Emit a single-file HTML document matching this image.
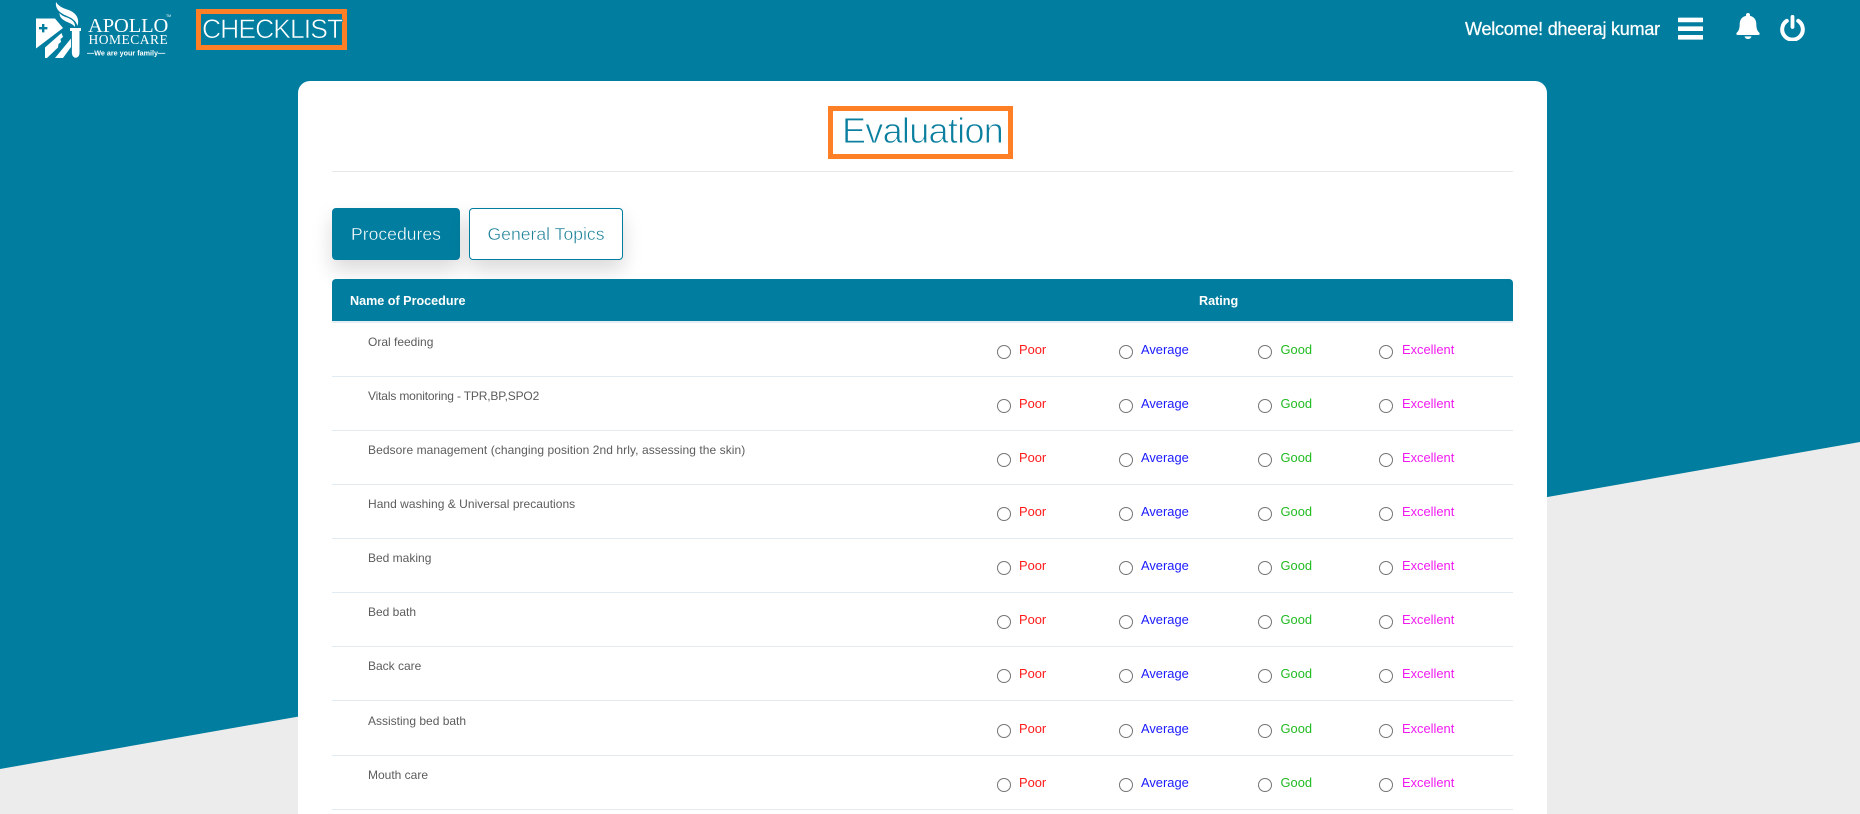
<!DOCTYPE html>
<html lang="en">
<head>
<meta charset="utf-8">
<title>Checklist - Evaluation</title>
<style>
html,body{margin:0;padding:0;width:1860px;height:814px;overflow:hidden}
body{position:relative;background:#ececec;font-family:"Liberation Sans",Arial,sans-serif}
.bg{position:absolute;left:0;top:0}
.abs{position:absolute;white-space:nowrap}
#logo{position:absolute;left:0;top:0}
#checklist{position:absolute;left:196px;top:9px;width:151px;height:41px;box-sizing:border-box;border:5px solid #ff7f27}
#checklist span{position:absolute;left:1px;top:0;line-height:31px;font-size:26.5px;color:#fff;letter-spacing:-.95px;white-space:nowrap;-webkit-text-stroke:.6px #007d9f}
#welcome{left:1465px;top:18px;line-height:22px;font-size:18px;color:#fff;letter-spacing:-.22px;-webkit-text-stroke:.25px #fff}
#card{position:absolute;left:298px;top:81px;width:1249px;height:733px;background:#fff;border-radius:12px 12px 0 0}
#evalbox{position:absolute;left:828px;top:106px;width:185px;height:53px;box-sizing:border-box;border:5px solid #ff7f27;background:#fff}
#evalbox span{position:absolute;left:9px;top:-2px;line-height:43px;font-size:36px;color:#0a7f9f;letter-spacing:-.7px;white-space:nowrap;-webkit-text-stroke:.9px #fff}
#divider{position:absolute;left:332px;top:171px;width:1181px;height:1px;background:#e6e8ea}
.tab{position:absolute;top:208px;height:52px;box-sizing:border-box;border-radius:4px;font-size:17.6px;line-height:50px;text-align:center;box-shadow:0 10px 20px rgba(0,0,0,.15);white-space:nowrap}
#t1{left:332px;width:128px;background:#007d9f;color:#fff;border:1px solid #007d9f;-webkit-text-stroke:.4px #007d9f}
#t2{left:469px;width:154px;background:#fff;color:#1c8099;border:1px solid #007d9f;-webkit-text-stroke:.4px #fff}
#thead{position:absolute;left:332px;top:279px;width:1181px;height:42px;background:#007d9f;border-radius:4px 4px 0 0;border-bottom:2px solid #e3edf4;color:#fff}
#thead b{position:absolute;top:0;line-height:45px;font-size:12.6px;font-weight:bold;white-space:nowrap}
.row{position:absolute;left:332px;width:1181px;height:53px;border-bottom:1px solid #e3ebf2}
.row .n{position:absolute;left:36px;top:11px;line-height:16px;font-size:12px;color:#5c5c5c;white-space:nowrap}
.row input{position:absolute;top:22px;width:14px;height:14px;margin:0;padding:0;-webkit-appearance:none;appearance:none;box-sizing:border-box;background:#fff;border:1px solid #757575;border-radius:50%}
.row label{position:absolute;top:18px;line-height:17px;font-size:12.9px;white-space:nowrap}
.p{left:687px;color:#ff1a1a}
.a{left:809px;color:#1a1aff}
.g{left:948.5px;color:#22bb22}
.e{left:1070px;color:#f01af0}
.r1{left:665px}.r2{left:787px}.r3{left:926px}.r4{left:1047px}
</style>
</head>
<body>
<svg class="bg" width="1860" height="814"><polygon points="0,0 1860,0 1860,442 0,769" fill="#007d9f"/></svg>

<svg id="logo" width="190" height="64" viewBox="0 0 190 64">
  <path d="M36 18.500H55L63 28 36 48.500Z" fill="#fff"/>
  <path d="M42 24h2.400v3h3v2.400h-3v3H42v-3h-3V27h3Z" fill="#007d9f"/>
  <path d="M45 47.500 61.500 33 63 37 60.500 39 61 42 58.500 44 58 47.500 47 58H45Z" fill="#fff"/>
  <path d="M55 58 71 38.500V47L63 58Z" fill="#fff"/>
  <path d="M70 28H81V31H79.500V53a3.800 4.800 0 0 1-7.600 0V31H70Z" fill="#fff"/>
  <path d="M56 2C55 9 60 13 67 16 73 18.500 76 21 77.500 26 79.500 19 77 14 70 10.500 64 8.500 59 7 56 2Z" fill="#fff"/>
  <path d="M59.500 13C59.500 19 65 21 69.500 23 72.500 24.500 74 25.500 75 27 75.500 22 72 19.500 67 17.500 64 16.500 61.500 15.500 59.500 13Z" fill="#fff"/>
  <text x="88" y="32" font-family="Liberation Serif,serif" font-size="20.5" letter-spacing="-.1" fill="#fff">APOLLO</text>
  <text x="88.500" y="44" font-family="Liberation Serif,serif" font-size="13.500" letter-spacing=".5" fill="#fff">HOMECARE</text>
  <text x="87" y="55.500" font-family="Liberation Sans,sans-serif" font-size="7.200" font-weight="bold" fill="#fff">—We are your family—</text>
  <text x="166" y="17" font-family="Liberation Sans,sans-serif" font-size="3.500" fill="#fff">TM</text>
</svg>

<div id="checklist"><span>CHECKLIST</span></div>

<div id="welcome" class="abs">Welcome! dheeraj kumar</div>

<svg class="abs" style="left:1678px;top:17px" width="25" height="23" viewBox="0 0 25 23">
  <rect x="0" y="0.600" width="25" height="4.600" rx=".6" fill="#fff"/>
  <rect x="0" y="9.400" width="25" height="4.600" rx=".6" fill="#fff"/>
  <rect x="0" y="18" width="25" height="4.600" rx=".6" fill="#fff"/>
</svg>
<svg class="abs" style="left:1736px;top:13px" width="24" height="26" viewBox="0 0 24 26">
  <path d="M12 0a2 2 0 0 1 2 2v.9c3.900.8 6.300 3.900 6.300 8 0 4.700 1 6.900 3 8.900.8.900.2 2.200-1 2.200H1.700c-1.200 0-1.800-1.300-1-2.200 2-2 3-4.200 3-8.900 0-4.100 2.400-7.200 6.300-8V2a2 2 0 0 1 2-2Z" fill="#fff"/>
  <path d="M8.600 23.400h6.800a3.400 2.600 0 0 1-6.800 0Z" fill="#fff"/>
</svg>
<svg class="abs" style="left:1780px;top:15px" width="25" height="26" viewBox="0 0 25 26">
  <path d="M6.800 5.800a10.300 10.300 0 1 0 11.400 0" fill="none" stroke="#fff" stroke-width="4" stroke-linecap="round"/>
  <path d="M12.500 1.800V12" fill="none" stroke="#fff" stroke-width="3.800" stroke-linecap="round"/>
</svg>

<div id="card"></div>
<div id="evalbox"><span>Evaluation</span></div>
<div id="divider"></div>

<div class="tab" id="t1">Procedures</div>
<div class="tab" id="t2">General Topics</div>

<div id="thead"><b style="left:18px">Name of Procedure</b><b style="left:867px">Rating</b></div>

<div class="row" style="top:323px"><span class="n">Oral feeding</span><input class="r1" type="radio" name="q1"><label class="p">Poor</label><input class="r2" type="radio" name="q1"><label class="a">Average</label><input class="r3" type="radio" name="q1"><label class="g">Good</label><input class="r4" type="radio" name="q1"><label class="e">Excellent</label></div>
<div class="row" style="top:377px"><span class="n" style="letter-spacing:-.16px">Vitals monitoring - TPR,BP,SPO2</span><input class="r1" type="radio" name="q2"><label class="p">Poor</label><input class="r2" type="radio" name="q2"><label class="a">Average</label><input class="r3" type="radio" name="q2"><label class="g">Good</label><input class="r4" type="radio" name="q2"><label class="e">Excellent</label></div>
<div class="row" style="top:431px"><span class="n" style="letter-spacing:.07px">Bedsore management (changing position 2nd hrly, assessing the skin)</span><input class="r1" type="radio" name="q3"><label class="p">Poor</label><input class="r2" type="radio" name="q3"><label class="a">Average</label><input class="r3" type="radio" name="q3"><label class="g">Good</label><input class="r4" type="radio" name="q3"><label class="e">Excellent</label></div>
<div class="row" style="top:485px"><span class="n" style="letter-spacing:.03px">Hand washing &amp; Universal precautions</span><input class="r1" type="radio" name="q4"><label class="p">Poor</label><input class="r2" type="radio" name="q4"><label class="a">Average</label><input class="r3" type="radio" name="q4"><label class="g">Good</label><input class="r4" type="radio" name="q4"><label class="e">Excellent</label></div>
<div class="row" style="top:539px"><span class="n">Bed making</span><input class="r1" type="radio" name="q5"><label class="p">Poor</label><input class="r2" type="radio" name="q5"><label class="a">Average</label><input class="r3" type="radio" name="q5"><label class="g">Good</label><input class="r4" type="radio" name="q5"><label class="e">Excellent</label></div>
<div class="row" style="top:593px"><span class="n">Bed bath</span><input class="r1" type="radio" name="q6"><label class="p">Poor</label><input class="r2" type="radio" name="q6"><label class="a">Average</label><input class="r3" type="radio" name="q6"><label class="g">Good</label><input class="r4" type="radio" name="q6"><label class="e">Excellent</label></div>
<div class="row" style="top:647px"><span class="n">Back care</span><input class="r1" type="radio" name="q7"><label class="p">Poor</label><input class="r2" type="radio" name="q7"><label class="a">Average</label><input class="r3" type="radio" name="q7"><label class="g">Good</label><input class="r4" type="radio" name="q7"><label class="e">Excellent</label></div>
<div class="row" style="top:702px"><span class="n">Assisting bed bath</span><input class="r1" type="radio" name="q8"><label class="p">Poor</label><input class="r2" type="radio" name="q8"><label class="a">Average</label><input class="r3" type="radio" name="q8"><label class="g">Good</label><input class="r4" type="radio" name="q8"><label class="e">Excellent</label></div>
<div class="row" style="top:756px"><span class="n">Mouth care</span><input class="r1" type="radio" name="q9"><label class="p">Poor</label><input class="r2" type="radio" name="q9"><label class="a">Average</label><input class="r3" type="radio" name="q9"><label class="g">Good</label><input class="r4" type="radio" name="q9"><label class="e">Excellent</label></div>
</body>
</html>
